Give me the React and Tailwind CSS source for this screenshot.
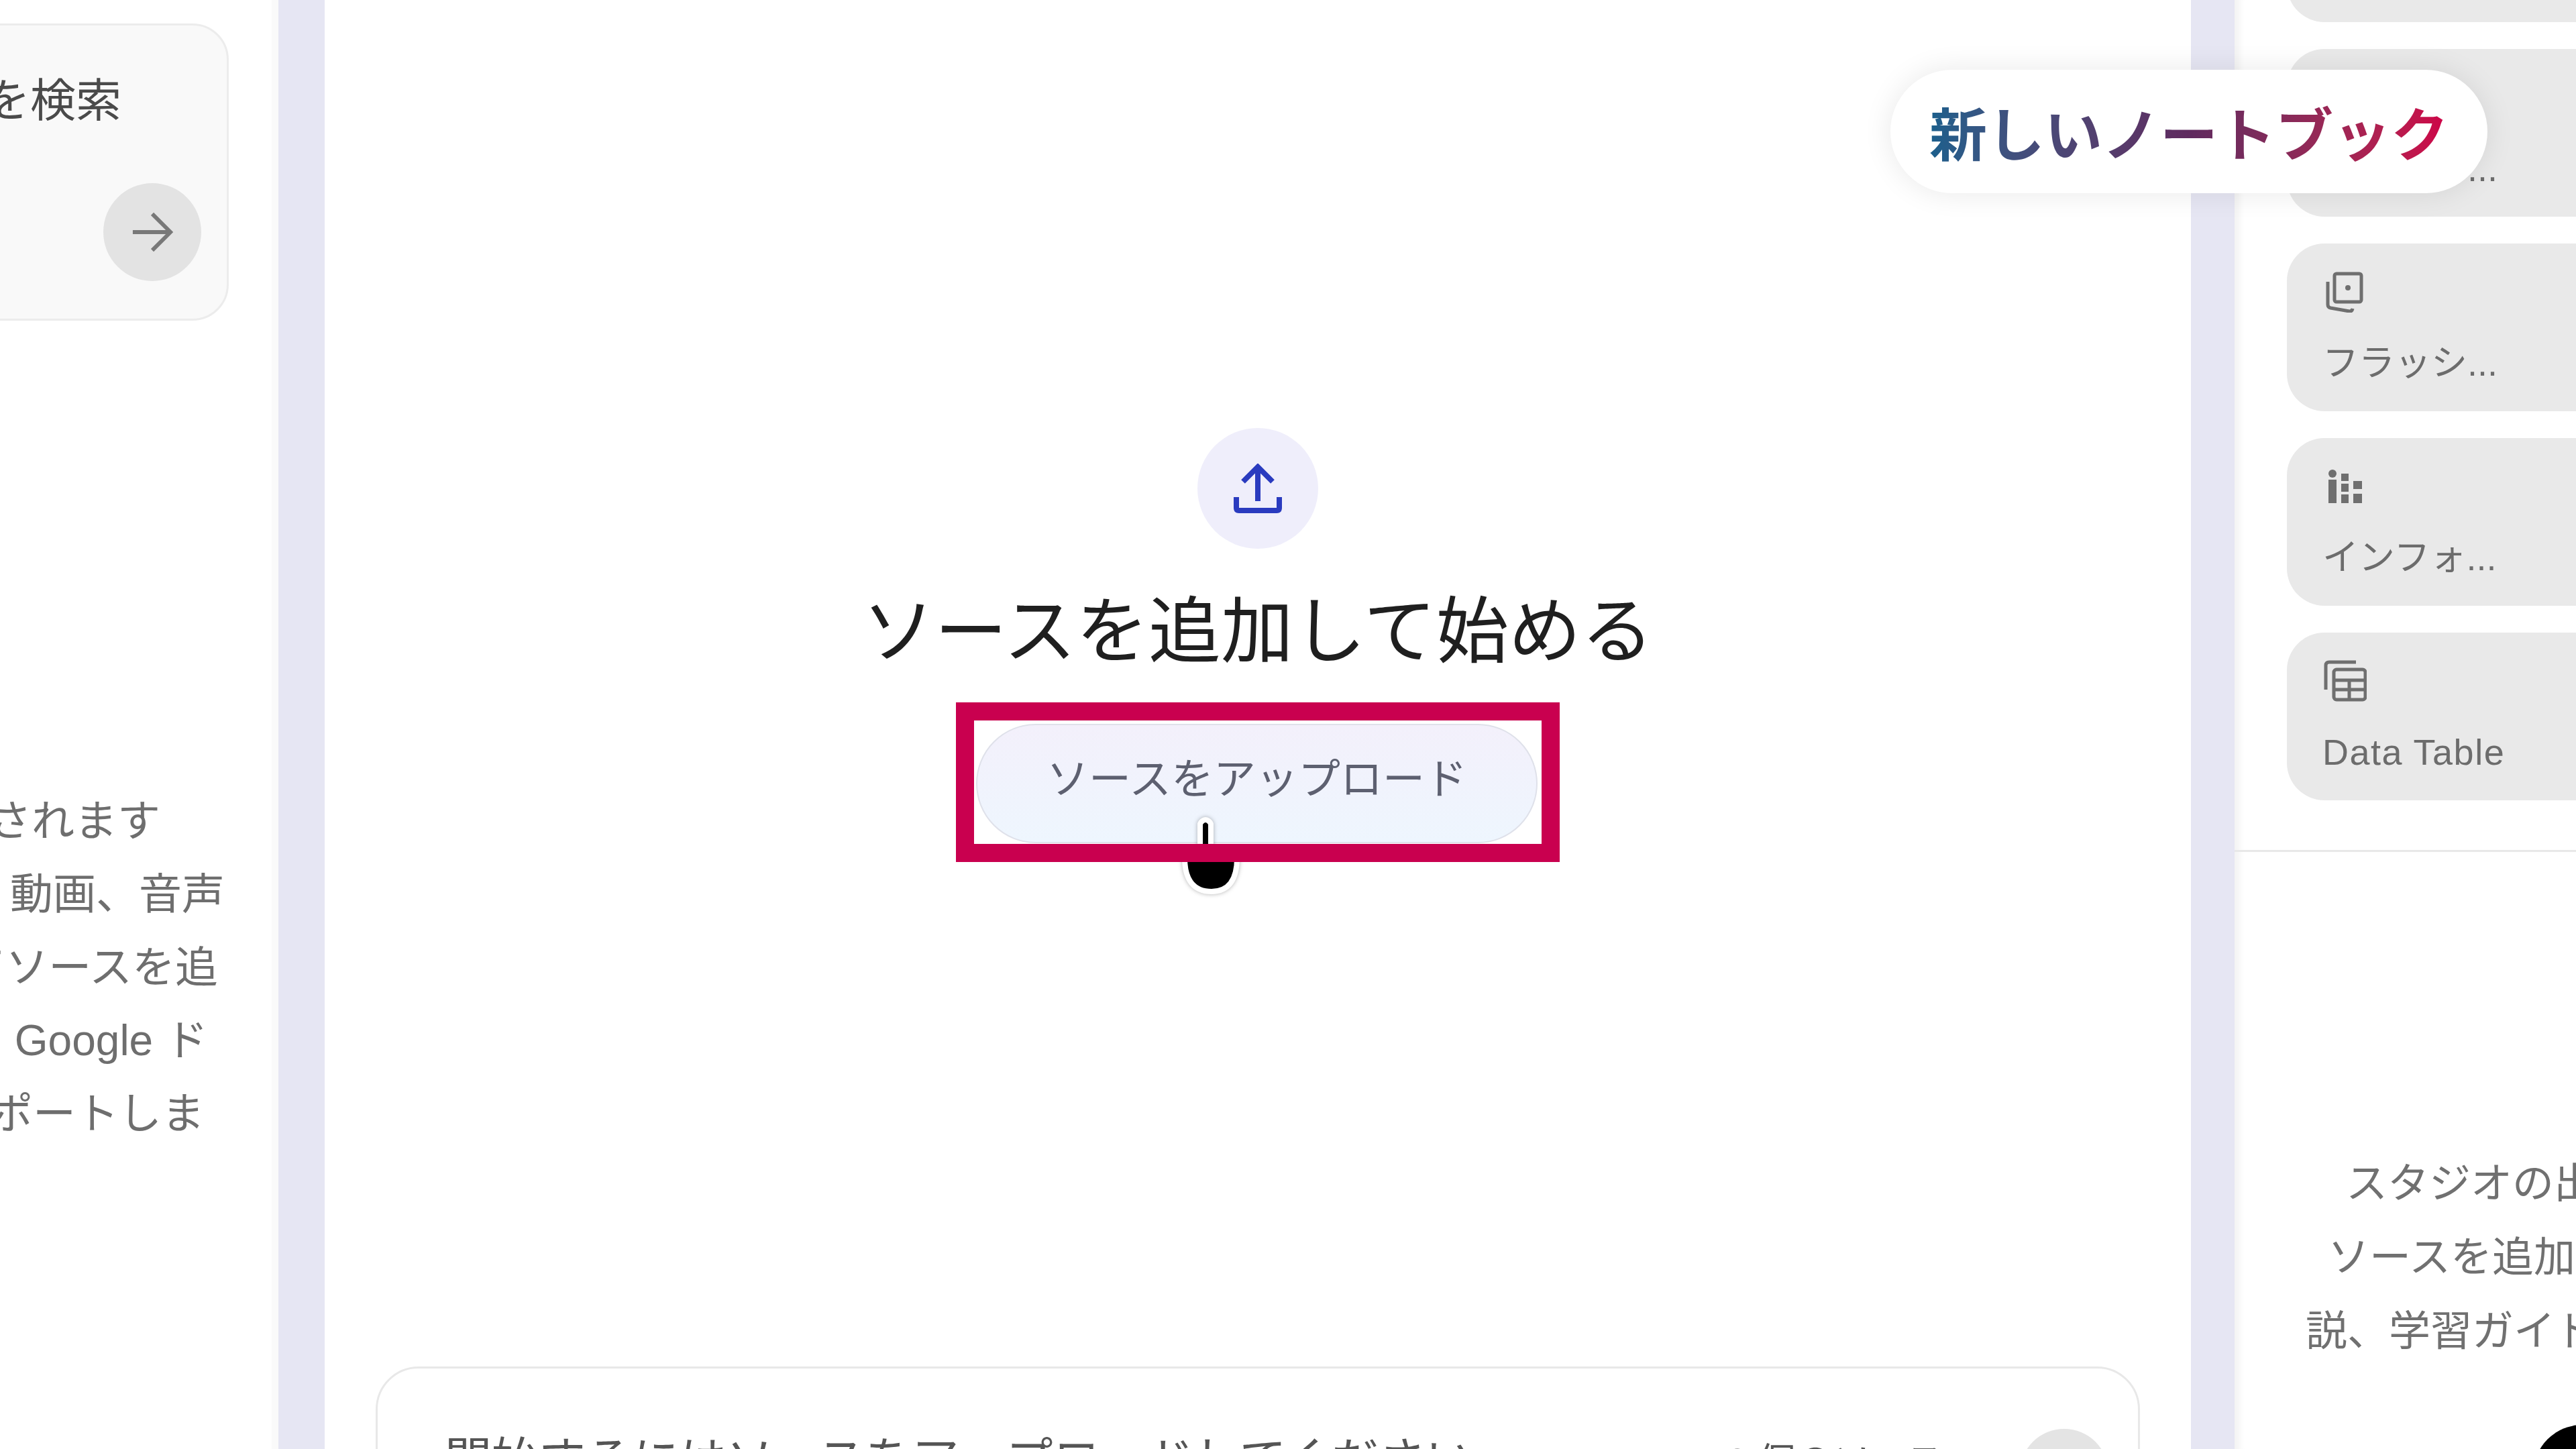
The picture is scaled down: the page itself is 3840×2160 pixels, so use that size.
import React from 'react';

const FlashIcon = () => (
  <svg viewBox="0 0 58 62" className="w-[58px] h-[62px] ml-[3px] fill-none stroke-[#6f6f6f] stroke-[5]">
    <rect x="15" y="4" width="40" height="42" rx="3" />
    <path d="M5 16v34q0 4 4 5l28 5q4 .5 5-4" />
    <circle cx="35" cy="25" r="4" className="fill-[#6f6f6f] stroke-none" />
  </svg>
);

const InfoIcon = () => (
  <svg viewBox="0 0 52 50" className="w-[52px] h-[50px] ml-[8px] fill-[#6f6f6f]">
    <circle cx="7" cy="6" r="6" />
    <rect x="1" y="15" width="12" height="35" />
    <rect x="20" y="6" width="11" height="11" />
    <rect x="20" y="21" width="11" height="12" />
    <rect x="20" y="37" width="11" height="13" />
    <rect x="38" y="17" width="13" height="12" />
    <rect x="38" y="36" width="13" height="14" />
  </svg>
);

const TableIcon = () => (
  <svg viewBox="0 0 64 62" className="w-[64px] h-[62px] ml-[2px] fill-none stroke-[#6f6f6f] stroke-[5]">
    <path d="M3 44V8q0-5 5-5h40" />
    <rect x="15" y="14" width="47" height="45" rx="4" />
    <path d="M15 30h47M15 44h47M38 30v29" />
  </svg>
);

const StudioCard = ({ icon, label, labelClass = 'text-[54px]' }) => (
  <div className="h-[250px] w-[600px] shrink-0 rounded-[56px] bg-[#e9e9e9] pl-[53px] pt-[40px] flex flex-col">
    <div className="h-[64px] flex items-center">{icon}</div>
    <p className={`mt-[42px] leading-[64px] text-[#6c6c6c] whitespace-nowrap ${labelClass}`}>{label}</p>
  </div>
);

const leftLines = [
  '表示されます',
  'テキスト、動画、音声',
  'クリックしてソースを追',
  'PDF、Google ド',
  'キュメントをサポートしま',
];

export default function App() {
  return (
    <div className="relative w-[3840px] h-[2160px] overflow-hidden flex bg-[#e6e6f3] font-['Liberation_Sans','Noto_Sans_CJK_JP',sans-serif]">
      {/* sources */}
      <div className="w-[415px] h-full shrink-0 bg-white border-r-[10px] border-[#fafafa] overflow-hidden flex flex-col items-end">
        <div className="mt-[35px] mr-[64px] w-[420px] h-[443px] shrink-0 rounded-[54px] bg-[#f9f9f9] border-[3px] border-[#ececec] flex flex-col items-end pt-[70px] pr-[38px]">
          <p className="text-[68px] leading-[84px] pr-[119px] text-[#4a4a4a] whitespace-nowrap">ソースを検索</p>
          <div className="mt-auto mb-[56px] w-[146px] h-[146px] rounded-full bg-[#e3e3e3] flex items-center justify-center">
            <svg viewBox="0 0 64 64" className="w-[62px] h-[62px] fill-none stroke-[#787878] stroke-[6]">
              <path d="M2 32h56M32 4l28 28-28 28" />
            </svg>
          </div>
        </div>
        <div className="mt-[692px] w-full flex flex-col text-[64px] leading-[109px] text-[#6e6e6e]">
          <p className="flex justify-end whitespace-nowrap pr-[166px]">{leftLines[0]}</p>
          <p className="flex justify-end whitespace-nowrap pr-[70px]">{leftLines[1]}</p>
          <p className="flex justify-end whitespace-nowrap pr-[80px]">{leftLines[2]}</p>
          <p className="flex justify-end whitespace-nowrap pr-[95px]">{leftLines[3]}</p>
          <p className="flex justify-end whitespace-nowrap pr-[100px]">{leftLines[4]}</p>
        </div>
      </div>

      {/* chat */}
      <div className="ml-[69px] w-[2782px] h-full shrink-0 bg-white overflow-hidden flex flex-col items-center">
        <div className="mt-[638px] w-[180px] h-[180px] shrink-0 rounded-full bg-[#efeefb] flex items-center justify-center">
          <svg viewBox="0 0 72 74" className="w-[72px] h-[74px] fill-none stroke-[#2a3bbf] stroke-[8]">
            <path d="M36 56V6M14 27L36 5l22 22M4 50v16q0 4 4 4h56q4 0 4-4V50" />
          </svg>
        </div>
        <h1 className="mt-[64px] text-[108px] leading-[120px] font-normal text-[#1f1f1f] whitespace-nowrap">ソースを追加して始める</h1>
        <div className="relative mt-[45px] w-[900px] h-[238px] shrink-0 pl-[30px] pt-[32px]">
          <button className="w-[837px] h-[178px] pb-[14px] rounded-full bg-linear-to-b from-[#f3f0fb] to-[#eef6fe] border-[2px] border-[#dfe1ea] text-[63px] text-[#5d6070] flex items-center justify-center">
            ソースをアップロード
          </button>
          {/* cursor sits under the highlight frame */}
          <svg viewBox="0 0 90 120" className="absolute left-[340px] top-[172px] w-[90px] h-[120px] overflow-visible drop-shadow-[0_0_3px_rgba(0,0,0,0.3)]">
            <path d="M28 10v50H5q0 46 36 46q34 0 34-46V60H36V10q-4-6-8 0z" fill="#000" stroke="#fff" strokeWidth="16" strokeLinejoin="round" paintOrder="stroke" />
          </svg>
          <div className="absolute inset-0 border-[27px] border-[#c9004f]" />
        </div>
        <div className="mt-[752px] w-[2630px] h-[300px] shrink-0 rounded-[64px] border-[3px] border-[#e8e8e8] bg-white pt-[92px] pl-[100px] pr-[44px] flex items-start">
          <p className="text-[70px] leading-[90px] text-[#555555] whitespace-nowrap">開始するにはソースをアップロードしてください</p>
          <p className="ml-auto mt-[2px] mr-[113px] text-[56px] leading-[90px] text-[#555555] whitespace-nowrap">0 個のソース</p>
          <div className="-mt-[2px] w-[132px] h-[132px] shrink-0 rounded-full bg-[#e4e4e4]" />
        </div>
      </div>

      {/* studio */}
      <div className="ml-[65px] flex-1 h-full bg-white shadow-[inset_14px_0_8px_-6px_#f4f4f4] overflow-hidden flex flex-col">
        <div className="-mt-[217px] ml-[78px] flex flex-col gap-[40px]">
          <StudioCard icon={null} label="動画解説" />
          <StudioCard icon={null} label="マインド..." />
          <StudioCard icon={<FlashIcon />} label="フラッシ..." />
          <StudioCard icon={<InfoIcon />} label="インフォ..." />
          <StudioCard icon={<TableIcon />} label="Data Table" labelClass="text-[54px] tracking-[1.5px]" />
        </div>
        <div className="mt-[74px] h-[3px] shrink-0 bg-[#e8e8e8]" />
        <div className="mt-[440px] flex flex-col text-[62px] leading-[110px] text-[#707070] whitespace-nowrap">
          <p className="pl-[166px]">スタジオの出力はここに保存</p>
          <p className="pl-[139px]">ソースを追加したら、クリック</p>
          <p className="pl-[106px]">説、学習ガイド、マインドマップ</p>
        </div>
      </div>

      <div className="absolute left-[3776px] top-[2124px] w-[147px] h-[147px] rounded-full bg-black" />

      <div className="absolute left-[2818px] top-[104px] w-[890px] h-[184px] pt-[14px] rounded-full bg-white shadow-[0_0_44px_rgba(0,0,0,0.09)] flex items-center justify-center">
        <span className="text-[86px] leading-[100px] font-bold whitespace-nowrap bg-linear-to-r from-[#1a5f8c] via-[#5f2a5f] to-[#cf0047] bg-clip-text text-transparent">
          新しいノートブック
        </span>
      </div>
    </div>
  );
}
